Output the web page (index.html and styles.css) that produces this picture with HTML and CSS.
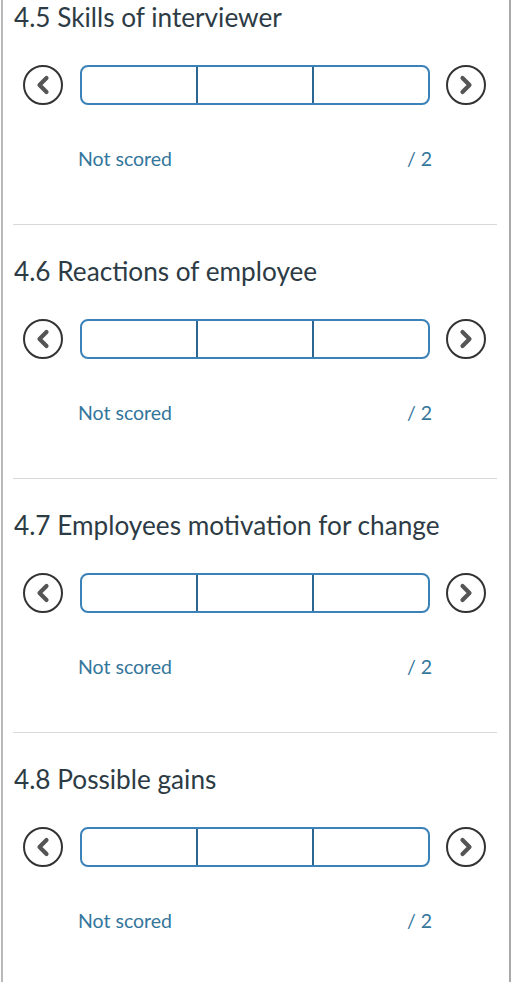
FILE: index.html
```html
<!DOCTYPE html>
<html lang="en">
<head>
    <meta charset="UTF-8">
    <meta name="viewport" content="width=device-width, initial-scale=1.0">
    <title>Rubric</title>
    <link rel="stylesheet" href="styles.css">
</head>
<body>
    <div class="panel">

        <div class="criterion">
            <div class="criterion-title">4.5 Skills of interviewer</div>
            <div class="rating-row">
                <button class="nav-btn">
                    <svg width="40" height="40" viewBox="0 0 40 40"><circle cx="20" cy="20" r="19" fill="none" stroke="#333" stroke-width="2"/><path d="M23.5 13 L16.5 20 L23.5 27" fill="none" stroke="#555" stroke-width="4.2" stroke-linecap="round" stroke-linejoin="round"/></svg>
                </button>
                <div class="rating-track">
                    <div class="rating-cell"></div>
                    <div class="rating-cell"></div>
                    <div class="rating-cell"></div>
                </div>
                <button class="nav-btn">
                    <svg width="40" height="40" viewBox="0 0 40 40"><circle cx="20" cy="20" r="19" fill="none" stroke="#333" stroke-width="2"/><path d="M16.5 13 L23.5 20 L16.5 27" fill="none" stroke="#555" stroke-width="4.2" stroke-linecap="round" stroke-linejoin="round"/></svg>
                </button>
            </div>
            <div class="score-row">
                <span class="score-label">Not scored</span>
                <span class="score-points">/ 2</span>
            </div>
        </div>

        <div class="criterion">
            <div class="criterion-title">4.6 Reactions of employee</div>
            <div class="rating-row">
                <button class="nav-btn">
                    <svg width="40" height="40" viewBox="0 0 40 40"><circle cx="20" cy="20" r="19" fill="none" stroke="#333" stroke-width="2"/><path d="M23.5 13 L16.5 20 L23.5 27" fill="none" stroke="#555" stroke-width="4.2" stroke-linecap="round" stroke-linejoin="round"/></svg>
                </button>
                <div class="rating-track">
                    <div class="rating-cell"></div>
                    <div class="rating-cell"></div>
                    <div class="rating-cell"></div>
                </div>
                <button class="nav-btn">
                    <svg width="40" height="40" viewBox="0 0 40 40"><circle cx="20" cy="20" r="19" fill="none" stroke="#333" stroke-width="2"/><path d="M16.5 13 L23.5 20 L16.5 27" fill="none" stroke="#555" stroke-width="4.2" stroke-linecap="round" stroke-linejoin="round"/></svg>
                </button>
            </div>
            <div class="score-row">
                <span class="score-label">Not scored</span>
                <span class="score-points">/ 2</span>
            </div>
        </div>

        <div class="criterion">
            <div class="criterion-title">4.7 Employees motivation for change</div>
            <div class="rating-row">
                <button class="nav-btn">
                    <svg width="40" height="40" viewBox="0 0 40 40"><circle cx="20" cy="20" r="19" fill="none" stroke="#333" stroke-width="2"/><path d="M23.5 13 L16.5 20 L23.5 27" fill="none" stroke="#555" stroke-width="4.2" stroke-linecap="round" stroke-linejoin="round"/></svg>
                </button>
                <div class="rating-track">
                    <div class="rating-cell"></div>
                    <div class="rating-cell"></div>
                    <div class="rating-cell"></div>
                </div>
                <button class="nav-btn">
                    <svg width="40" height="40" viewBox="0 0 40 40"><circle cx="20" cy="20" r="19" fill="none" stroke="#333" stroke-width="2"/><path d="M16.5 13 L23.5 20 L16.5 27" fill="none" stroke="#555" stroke-width="4.2" stroke-linecap="round" stroke-linejoin="round"/></svg>
                </button>
            </div>
            <div class="score-row">
                <span class="score-label">Not scored</span>
                <span class="score-points">/ 2</span>
            </div>
        </div>

        <div class="criterion last">
            <div class="criterion-title">4.8 Possible gains</div>
            <div class="rating-row">
                <button class="nav-btn">
                    <svg width="40" height="40" viewBox="0 0 40 40"><circle cx="20" cy="20" r="19" fill="none" stroke="#333" stroke-width="2"/><path d="M23.5 13 L16.5 20 L23.5 27" fill="none" stroke="#555" stroke-width="4.2" stroke-linecap="round" stroke-linejoin="round"/></svg>
                </button>
                <div class="rating-track">
                    <div class="rating-cell"></div>
                    <div class="rating-cell"></div>
                    <div class="rating-cell"></div>
                </div>
                <button class="nav-btn">
                    <svg width="40" height="40" viewBox="0 0 40 40"><circle cx="20" cy="20" r="19" fill="none" stroke="#333" stroke-width="2"/><path d="M16.5 13 L23.5 20 L16.5 27" fill="none" stroke="#555" stroke-width="4.2" stroke-linecap="round" stroke-linejoin="round"/></svg>
                </button>
            </div>
            <div class="score-row">
                <span class="score-label">Not scored</span>
                <span class="score-points">/ 2</span>
            </div>
        </div>

    </div>
</body>
</html>
```

FILE: styles.css
```css
body {
    margin: 0;
    background-color: white;
    font-family: Lato, "Open Sans", sans-serif;
    color: #2d3b45;
}

.panel {
    width: 510px;
    min-height: 982px;
    margin-left: 1px;
    border-left: 2px solid #b9b9b9;
    border-right: 2px solid #a9a9a9;
    box-sizing: border-box;
}

.criterion {
    margin: 0 12px 0 10px;
    border-bottom: 1px solid #d5d9dc;
    padding-bottom: 53px;
    margin-bottom: 29px;
}

.criterion.last {
    border-bottom: none;
}

.criterion-title {
    font-size: 26.2px;
    line-height: 34px;
    padding-left: 1px;
    color: #2d3b45;
}

.rating-row {
    display: flex;
    align-items: center;
    margin-top: 31px;
    padding-left: 10px;
}

.nav-btn {
    width: 40px;
    height: 40px;
    padding: 0;
    border: none;
    background: none;
    display: flex;
}

.rating-track {
    width: 350px;
    height: 40px;
    margin: 0 16px 0 17px;
    display: flex;
    border: 2px solid #3b82b8;
    border-radius: 8px;
    box-sizing: border-box;
}

.rating-cell {
    flex: 1;
    border-left: 2px solid #2d6690;
}

.rating-cell:first-child {
    border-left: none;
}

.score-row {
    display: flex;
    justify-content: space-between;
    margin-top: 42px;
    padding-left: 65px;
    width: 354px;
    font-size: 19.5px;
    line-height: 24px;
    color: #33769b;
}
```
